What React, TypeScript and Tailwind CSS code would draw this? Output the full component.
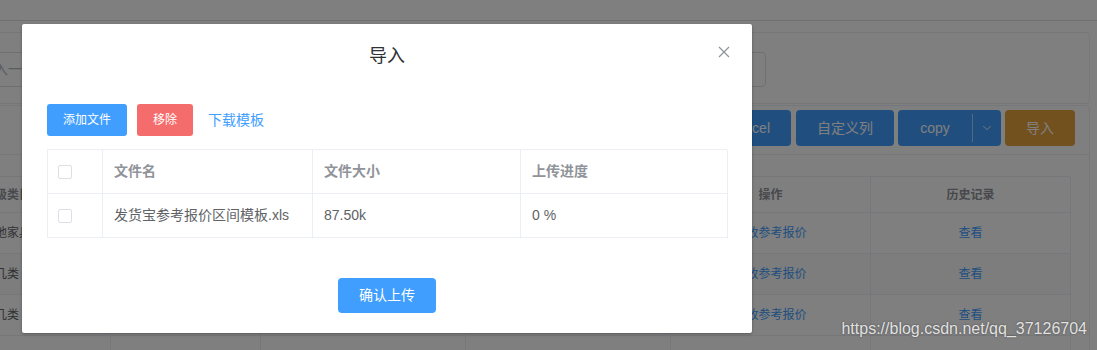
import { ChevronDown } from "lucide-react";

const rows = [
  { cat: "实地家具", op: "修改参考报价" },
  { cat: "茶几类", op: "修改参考报价", striped: true },
  { cat: "茶几类", op: "修改参考报价" },
];

function PageBehind() {
  return (
    <div className="text-[12px] text-[#606266]">
      <div className="h-[21px] border-b border-[#dcdfe6]" />
      <div className="-ml-[40px] mr-[7px] mt-[11px]">
        <div className="h-[72px] rounded-[4px] border border-[#ebeef5] pt-[19px]">
          <div className="flex h-[35px] w-[805px] items-center rounded-[4px] border border-[#dcdfe6] pl-[4px] text-[14px] text-[#b4b6ba]">
            请输入一级类目
          </div>
        </div>
        <div className="mt-[1px] h-[260px] rounded-[4px] border border-[#ebeef5]">
          <div className="flex justify-end border-b border-[#ebeef5] pb-[8px] pr-[14px] pt-[4px] text-[14px] text-white">
            <button className="flex h-[36px] w-[98px] items-center justify-end rounded-[4px] bg-[#409eff] pr-[21px]">导出Excel</button>
            <button className="ml-[5px] h-[36px] w-[98px] rounded-[4px] bg-[#409eff]">自定义列</button>
            <div className="ml-[4px] flex h-[36px] w-[103px] items-center rounded-[4px] bg-[#409eff]">
              <span className="flex-1 text-center">copy</span>
              <span className="flex h-[28px] w-[29px] items-center justify-center border-l border-white/50">
                <ChevronDown className="h-[14px] w-[14px]" strokeWidth={1.5} />
              </span>
            </div>
            <button className="ml-[4px] h-[36px] w-[70px] rounded-[4px] bg-[#e6a23c]">导入</button>
          </div>
          <div className="ml-[19px] mt-[21px] w-[1090px] border-l border-t border-[#ebeef5]">
            <div className="grid h-[36px] grid-cols-[130px_150px_205px_205px_200px_200px] font-bold text-[#909399]">
              <div className="flex items-center border-b border-r border-[#ebeef5] pl-[2px]">二级类目</div>
              <div className="border-b border-r border-[#ebeef5]" />
              <div className="border-b border-r border-[#ebeef5]" />
              <div className="border-b border-r border-[#ebeef5]" />
              <div className="flex items-center justify-center border-b border-r border-[#ebeef5]">操作</div>
              <div className="flex items-center justify-center border-b border-r border-[#ebeef5]">历史记录</div>
            </div>
            {rows.map((r, i) => (
              <div
                key={i}
                className={`grid h-[41px] grid-cols-[130px_150px_205px_205px_200px_200px] ${r.striped ? "bg-[#fafafa]" : ""}`}
              >
                <div className="flex items-center border-b border-r border-[#ebeef5] pl-[2px]">{r.cat}</div>
                <div className="border-b border-r border-[#ebeef5]" />
                <div className="border-b border-r border-[#ebeef5]" />
                <div className="border-b border-r border-[#ebeef5]" />
                <div className="flex items-center justify-center border-b border-r border-[#ebeef5] text-[#409eff]">{r.op}</div>
                <div className="flex items-center justify-center border-b border-r border-[#ebeef5] text-[#409eff]">查看</div>
              </div>
            ))}
            <div className="grid h-[41px] grid-cols-[130px_150px_205px_205px_200px_200px]">
              {[0, 1, 2, 3, 4, 5].map((c) => (
                <div key={c} className="border-r border-[#ebeef5]" />
              ))}
            </div>
          </div>
        </div>
      </div>
    </div>
  );
}

function Checkbox() {
  return <span className="block h-[14px] w-[14px] rounded-[2px] border border-[#dcdfe6] bg-white" />;
}

function ImportDialog() {
  return (
    <div className="absolute left-[22px] top-[24px] w-[730px] rounded-[2px] bg-white shadow-[0_1px_3px_rgba(0,0,0,0.3)]">
      <div className="relative px-5 pb-[10px] pt-5 text-center">
        <span className="text-[18px] leading-6 text-[#303133]">导入</span>
        <button className="absolute right-5 top-5 flex h-4 w-4 items-center justify-center">
          <svg width="12" height="12" viewBox="0 0 12 12" fill="none" stroke="#909399" strokeWidth="1.2">
            <path d="M1 1L11 11M11 1L1 11" />
          </svg>
        </button>
      </div>
      <div className="px-[25px] pb-[30px] pt-[25px]">
        <div className="flex items-center text-[12px]">
          <button className="h-[32px] w-[80px] rounded-[3px] bg-[#409eff] text-white">添加文件</button>
          <button className="ml-[10px] h-[32px] w-[56px] rounded-[3px] bg-[#f56c6c] text-white">移除</button>
          <span className="ml-[15px] text-[14px] text-[#409eff]">下载模板</span>
        </div>
        <div className="mt-[13px] border-l border-t border-[#ebeef5] text-[14px]">
          <div className="grid h-[44px] grid-cols-[55px_210px_208px_207px] font-bold text-[#909399]">
            <div className="flex items-center border-b border-r border-[#ebeef5] pl-[10px]">
              <Checkbox />
            </div>
            <div className="flex items-center border-b border-r border-[#ebeef5] pl-[11px]">文件名</div>
            <div className="flex items-center border-b border-r border-[#ebeef5] pl-[11px]">文件大小</div>
            <div className="flex items-center border-b border-r border-[#ebeef5] pl-[11px]">上传进度</div>
          </div>
          <div className="grid h-[44px] grid-cols-[55px_210px_208px_207px] text-[#606266]">
            <div className="flex items-center border-b border-r border-[#ebeef5] pl-[10px]">
              <Checkbox />
            </div>
            <div className="flex items-center border-b border-r border-[#ebeef5] pl-[11px]">发货宝参考报价区间模板.xls</div>
            <div className="flex items-center border-b border-r border-[#ebeef5] pl-[11px]">87.50k</div>
            <div className="flex items-center border-b border-r border-[#ebeef5] pl-[11px]">0 %</div>
          </div>
        </div>
      </div>
      <div className="flex justify-center px-5 pb-5 pt-[10px]">
        <button className="h-[35px] w-[98px] rounded-[4px] bg-[#409eff] text-[14px] text-white">确认上传</button>
      </div>
    </div>
  );
}

export default function App() {
  return (
    <div className="relative h-[350px] w-[1097px] overflow-hidden bg-white font-['Liberation_Sans','Noto_Sans_CJK_SC',sans-serif]">
      <PageBehind />
      <div className="absolute inset-0 bg-black/50" />
      <ImportDialog />
      <div className="absolute right-[10px] top-[317px] text-[16px] text-[#e2e2e2] [text-shadow:0_0_2px_rgba(0,0,0,0.5)]">
        https://blog.csdn.net/qq_37126704
      </div>
    </div>
  );
}
